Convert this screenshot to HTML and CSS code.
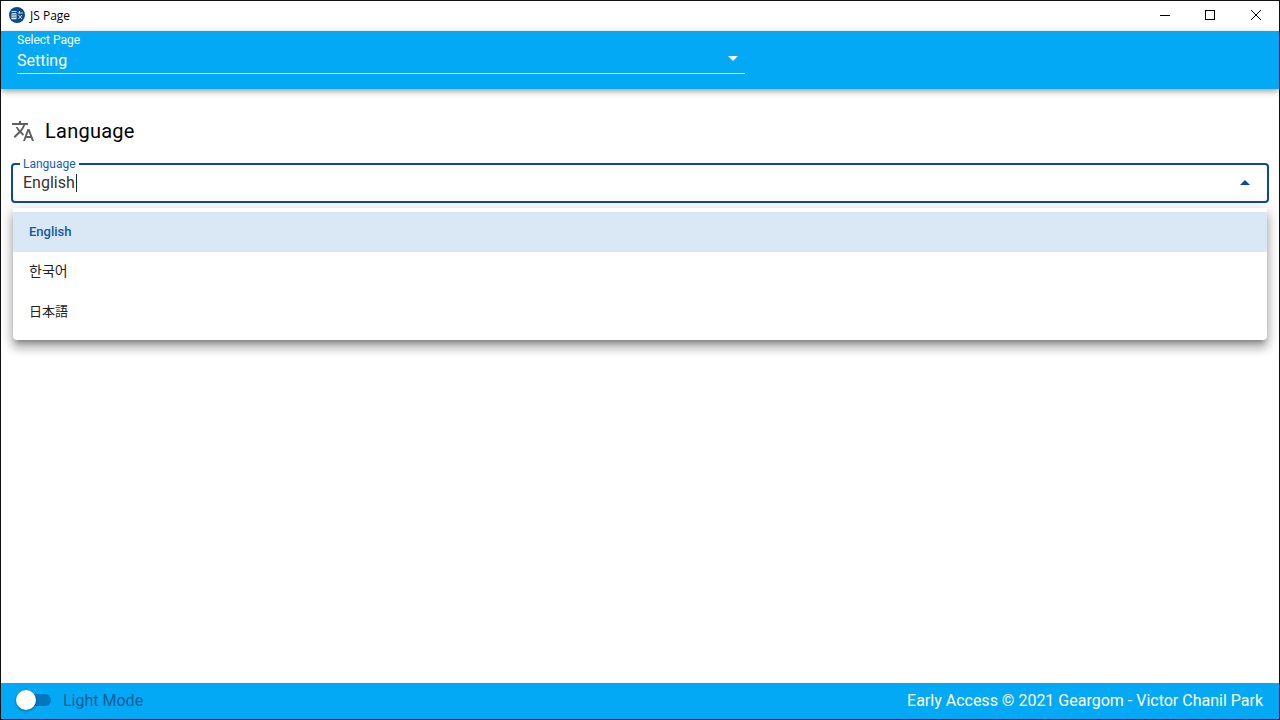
FILE: index.html
```html
<!DOCTYPE html>
<html lang="en">
<head>
<meta charset="utf-8">
<title>JS Page</title>
<link rel="stylesheet" href="styles.css">
</head>
<body>
<div class="window">
  <header class="titlebar">
    <div class="title-left">
      <svg class="logo" viewBox="0 0 16 16" width="16" height="16"><circle cx="8" cy="8" r="8" fill="#0d4a8c"/><path d="M2.5 4.5h5M3 6.5h4v5H3zM5 6.5v5M3 9h4M2.5 11.8h5M10.5 4v2M8.8 6h5M9.5 8l3.5 4M13 8l-3.5 4" fill="none" stroke="#fff" stroke-width=".8"/></svg>
      <span class="title-text">JS Page</span>
    </div>
    <div class="win-controls">
      <svg class="win-btn" width="46" height="30" viewBox="0 0 46 30"><path d="M19 15.5h10" stroke="#000" fill="none"/></svg>
      <svg class="win-btn" width="46" height="30" viewBox="0 0 46 30"><rect x="18.5" y="10.5" width="9" height="9" stroke="#000" fill="none"/></svg>
      <svg class="win-btn" width="46" height="30" viewBox="0 0 46 30"><path d="M18 10l10 10M28 10l-10 10" stroke="#000" fill="none"/></svg>
    </div>
  </header>
  <div class="appbar">
    <div class="page-select">
      <div class="page-label">Select Page</div>
      <div class="page-value"><span>Setting</span><span class="arrow-down"></span></div>
    </div>
  </div>
  <main class="content">
    <div class="heading">
      <svg class="heading-icon" viewBox="0 0 24 24" width="24" height="24"><path fill="#5f5f5f" d="M12.87 15.07l-2.54-2.51.03-.03c1.74-1.94 2.98-4.17 3.71-6.53H17V4h-7V2H8v2H1v1.99h11.17C11.5 7.92 10.44 9.75 9 11.35 8.07 10.32 7.3 9.19 6.69 8h-2c.73 1.63 1.73 3.17 2.98 4.56l-5.09 5.02L4 19l5-5 3.11 3.11.76-2.04zM18.5 10h-2L12 22h2l1.12-3h4.75L21 22h2l-4.5-12zm-2.62 7l1.62-4.33L19.12 17h-3.24z"/></svg>
      <h2 class="heading-text">Language</h2>
    </div>
    <div class="field">
      <span class="field-label">Language</span>
      <span class="field-value">English</span><span class="caret"></span>
      <span class="arrow-up"></span>
      <ul class="menu">
        <li class="menu-item selected">English</li>
        <li class="menu-item ko">한국어</li>
        <li class="menu-item ja" lang="ja">日本語</li>
      </ul>
    </div>
  </main>
  <footer class="footer">
    <div class="mode">
      <div class="switch"><span class="thumb"></span></div>
      <span class="mode-text">Light Mode</span>
    </div>
    <span class="credit">Early Access © 2021 Geargom - Victor Chanil Park</span>
  </footer>
</div>
</body>
</html>
```
FILE: styles.css
```css
* { box-sizing: border-box; }
html, body { margin: 0; height: 100%; }
body { font-family: Roboto, "Noto Sans CJK KR", sans-serif; background: #fff; overflow: hidden; }
.window { width: 1280px; height: 720px; border: 1px solid #111; display: flex; flex-direction: column; background: #fff; }
.titlebar { height: 30px; padding-bottom: 2px; display: flex; justify-content: space-between; align-items: center; flex: none; }
.title-left { display: flex; align-items: center; gap: 5px; padding-left: 8px; }
.logo { display: block; }
.title-text { font-family: "Open Sans", sans-serif; font-size: 12px; color: #000; }
.win-controls { display: flex; }
.win-btn { display: block; }
.appbar { height: 58px; flex: none; background: #03a9f4; padding-left: 16px; box-shadow: 0 2px 4px -1px rgba(0,0,0,.2), 0 4px 5px rgba(0,0,0,.14), 0 1px 10px rgba(0,0,0,.12); position: relative; }
.page-select { width: 728px; height: 43px; border-bottom: 1px solid #fff; color: #fff; }
.page-label { font-size: 12px; line-height: 16px; padding-top: 1px; height: 18px; }
.page-value { display: flex; justify-content: space-between; align-items: center; font-size: 16px; font-weight: 400; line-height: 24px; padding-right: 7px; }
.arrow-down { width: 0; height: 0; border-left: 5px solid transparent; border-right: 5px solid transparent; border-top: 5px solid #fff; margin-top: -5px; }
.content { flex: 1; padding: 0 10px; }
.heading { display: flex; align-items: center; gap: 10px; margin-top: 30px; height: 24px; }
.heading-icon { display: block; flex: none; }
.heading-text { margin: 0; font-size: 20px; font-weight: 400; line-height: 24px; letter-spacing: .25px; color: #000; }
.field { position: relative; margin-top: 20px; height: 40px; border: 2px solid #0d47a1; border-radius: 4px; padding: 6px 10px 0; font-size: 16px; line-height: 24px; color: #333; display: flex; align-items: flex-start; }
.field-label { position: absolute; left: 7px; top: -8px; padding: 0 3px; background: #fff; color: #1261b0; font-size: 12px; line-height: 14px; }
.caret { width: 1px; height: 18px; background: #0d2a55; margin: 3px 0 0 1px; }
.arrow-up { position: absolute; right: 17px; top: 15px; width: 0; height: 0; border-left: 5px solid transparent; border-right: 5px solid transparent; border-bottom: 5px solid #0d47a1; }
.menu { position: absolute; left: 0; right: 0; top: 43px; margin: 0; padding: 4px 0 8px; height: 132px; list-style: none; background: #fff; border-radius: 0 0 4px 4px; box-shadow: 0 5px 5px -3px rgba(0,0,0,.3), 0 8px 10px 1px rgba(0,0,0,.2), 0 3px 14px 2px rgba(0,0,0,.16); }
.menu-item { height: 40px; padding-left: 16px; font-size: 13px; line-height: 38px; color: #222; }
.menu-item.selected { background: #dae8f6; color: #0d5aa8; font-weight: 500; line-height: 40px; }
.menu-item.ko { font-size: 14px; }
.menu-item.ja { font-family: "Noto Sans CJK JP", sans-serif; }
.footer { height: 36px; flex: none; background: #03a9f4; display: flex; justify-content: space-between; align-items: center; padding: 0 16px 2px; }
.mode { display: flex; align-items: center; gap: 12px; }
.switch { position: relative; width: 34px; height: 12px; border-radius: 6px; background: #0277bd; }
.thumb { position: absolute; left: -1px; top: -4px; width: 20px; height: 20px; border-radius: 50%; background: #fff; box-shadow: 0 1px 3px rgba(0,0,0,.4); }
.mode-text { font-size: 16px; color: #0b5c94; }
.credit { font-size: 16px; font-weight: 400; color: #fff; }
```
